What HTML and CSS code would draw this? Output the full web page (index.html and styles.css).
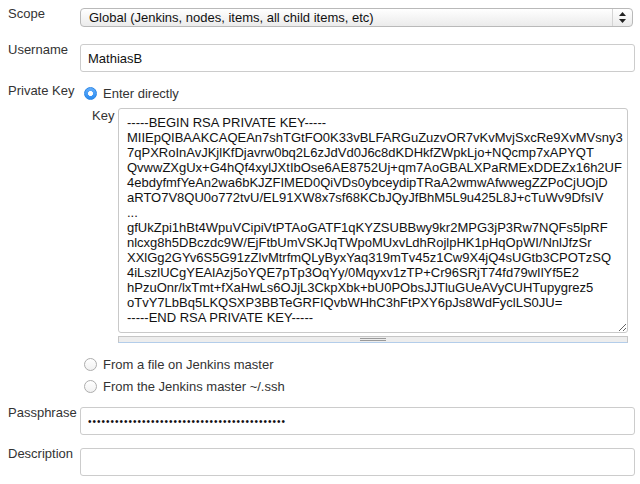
FILE: index.html
```html
<!DOCTYPE html>
<html lang="en">
<head>
    <meta charset="UTF-8">
    <meta name="viewport" content="width=device-width, initial-scale=1.0">
    <title>SSH Username with private key</title>
    <link rel="stylesheet" href="styles.css">
</head>
<body>
    <div class="row scope">
        <div class="label">Scope</div>
        <div class="field">
            <div class="select">
                <select>
                    <option>Global (Jenkins, nodes, items, all child items, etc)</option>
                    <option>System (Jenkins and nodes only)</option>
                </select>
                <span class="arrows">
                    <svg width="7" height="11" viewBox="0 0 7 11"><path d="M3.5 0L7 4H0z M3.5 11L0 7h7z" fill="#222"/></svg>
                </span>
            </div>
        </div>
    </div>

    <div class="row">
        <div class="label">Username</div>
        <div class="field"><input type="text" class="text" value="MathiasB"></div>
    </div>

    <div class="row key-row">
        <div class="label">Private Key</div>
        <div class="field">
            <label class="radio"><input type="radio" name="source" checked> Enter directly</label>
            <div class="key">
                <div class="key-label">Key</div>
                <div class="key-box">
<textarea wrap="off" spellcheck="false">-----BEGIN RSA PRIVATE KEY-----
MIIEpQIBAAKCAQEAn7shTGtFO0K33vBLFARGuZuzvOR7vKvMvjSxcRe9XvMVsny3
7qPXRoInAvJKjlKfDjavrw0bq2L6zJdVd0J6c8dKDHkfZWpkLjo+NQcmp7xAPYQT
QvwwZXgUx+G4hQf4xylJXtIbOse6AE8752Uj+qm7AoGBALXPaRMExDDEZx16h2UF
4ebdyfmfYeAn2wa6bKJZFIMED0QiVDs0ybceydipTRaA2wmwAfwwegZZPoCjUOjD
aRTO7V8QU0o772tvU/EL91XW8x7sf68KCbJQyJfBhM5L9u425L8J+cTuWv9DfsIV
...
gfUkZpi1hBt4WpuVCipiVtPTAoGATF1qKYZSUBBwy9kr2MPG3jP3Rw7NQFs5lpRF
nlcxg8h5DBczdc9W/EjFtbUmVSKJqTWpoMUxvLdhRojlpHK1pHqOpWI/NnlJfzSr
XXlGg2GYv6S5G91zZlvMtrfmQLyByxYaq319mTv45z1Cw9X4jQ4sUGtb3CPOTzSQ
4iLszlUCgYEAlAzj5oYQE7pTp3OqYy/0Mqyxv1zTP+Cr96SRjT74fd79wIlYf5E2
hPzuOnr/lxTmt+fXaHwLs6OJjL3CkpXbk+bU0PObsJJTluGUeAVyCUHTupygrez5
oTvY7LbBq5LKQSXP3BBTeGRFIQvbWHhC3hFtPXY6pJs8WdFyclLS0JU=
-----END RSA PRIVATE KEY-----</textarea>
                    <div class="resize-bar"><div class="grip"></div></div>
                </div>
            </div>
            <label class="radio first-alt"><input type="radio" name="source"> From a file on Jenkins master</label>
            <label class="radio alt"><input type="radio" name="source"> From the Jenkins master ~/.ssh</label>
        </div>
    </div>

    <div class="row">
        <div class="label">Passphrase</div>
        <div class="field"><input type="password" class="text password" value="11111111111111111111111111111111111111111111"></div>
    </div>

    <div class="row">
        <div class="label">Description</div>
        <div class="field"><input type="text" class="text" value=""></div>
    </div>
</body>
</html>
```

FILE: styles.css
```css
body {
    margin: 0;
    padding: 6px 5px 0 8px;
    font: 13px/15px "Liberation Sans", Arial, sans-serif;
    color: #333;
    background: #fff;
}

.row {
    display: flex;
    margin-bottom: 11px;
}
.row.scope {
    margin-bottom: 15px;
}
.row.key-row {
    margin-top: 1px;
    margin-bottom: 8px;
}
.label {
    width: 72px;
    flex: none;
}
.field {
    flex: 1;
    min-width: 0;
    padding-top: 2px;
}
.key-row .field {
    padding-top: 0;
}

/* scope dropdown */
.select {
    display: flex;
    height: 19px;
    margin-right: 2px;
    box-sizing: border-box;
    border: 1px solid #b9b9b9;
    border-radius: 4px;
    background: linear-gradient(#ffffff, #ebebeb);
}
.select select {
    flex: 1;
    appearance: none;
    -webkit-appearance: none;
    border: 0;
    background: transparent;
    padding: 0 0 0 8px;
    font: inherit;
    color: #111;
    outline: none;
}
.arrows {
    width: 19px;
    display: flex;
    align-items: center;
    justify-content: center;
    border-left: 1px solid #d4d4d4;
}

input.text {
    width: 100%;
    height: 28px;
    box-sizing: border-box;
    border: 1px solid #cccccc;
    border-radius: 3px;
    padding: 0 7px;
    font: inherit;
    color: #111;
    outline: none;
}
/* smaller bullets, same run length */
input.password {
    font-size: 10px;
    letter-spacing: 1px;
}

/* radio buttons */
.radio {
    display: flex;
    align-items: center;
    gap: 6px;
    height: 21px;
    padding-left: 4px;
    color: #333;
}
.radio.first-alt {
    margin-top: 10px;
    height: 22px;
}
.radio.alt {
    height: 22px;
}
.radio input {
    appearance: none;
    -webkit-appearance: none;
    width: 13px;
    height: 13px;
    margin: 0;
    border-radius: 50%;
    border: 1px solid #adadad;
    background: linear-gradient(#ffffff, #f1f1f1);
    box-sizing: border-box;
}
.radio input:checked {
    border-color: #2b86e6;
    background: radial-gradient(circle, #fff 0 2.2px, transparent 2.6px), linear-gradient(#64aefb, #2a8bf0);
}

/* key textarea */
.key {
    display: flex;
    padding-left: 12px;
    margin-top: 4px;
    margin-right: 7px;
}
.key-label {
    width: 26px;
    flex: none;
}
.key-box {
    flex: 1;
    min-width: 0;
}
.key-box textarea {
    display: block;
    width: 100%;
    height: 225px;
    box-sizing: border-box;
    border: 1px solid #c9c9c9;
    border-radius: 3px;
    padding: 6px 8px;
    font: 13px/15px "Liberation Sans", Arial, sans-serif;
    color: #111;
    overflow: hidden;
    resize: both;
    white-space: pre;
    outline: none;
}
.resize-bar {
    height: 7px;
    margin-top: 3px;
    box-sizing: border-box;
    background: #ededed;
    border: 1px solid #c6c6c6;
    border-bottom-color: #b3cdea;
}
.grip {
    width: 26px;
    height: 1px;
    margin: 1px auto 0;
    border-top: 1px solid #9a9a9a;
    border-bottom: 1px solid #9a9a9a;
}
```
